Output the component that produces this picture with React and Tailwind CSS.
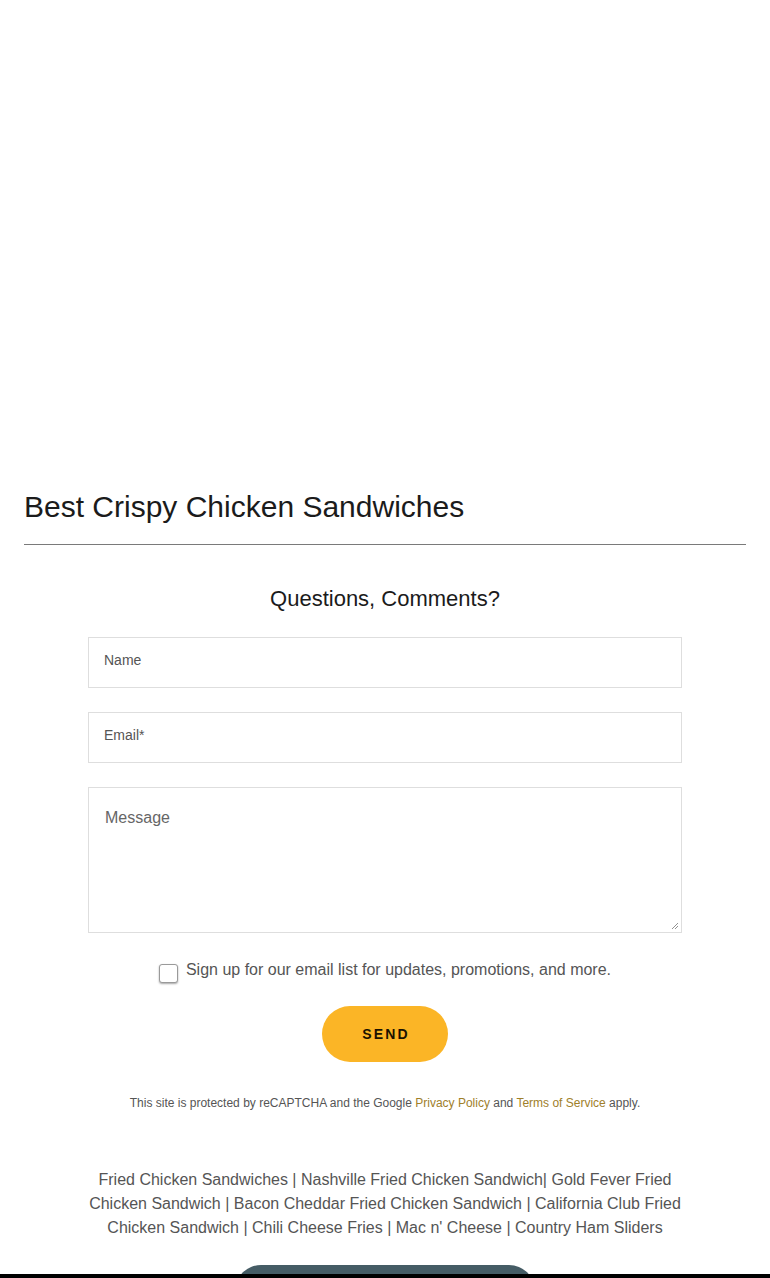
export default function App() {
  const font = { fontFamily: '"Liberation Sans", Arial, sans-serif' };
  return (
    <div className="bg-white min-h-[1278px] relative" style={font}>
      <div className="h-[489px]" />
      <div className="px-6">
        <h2 className="text-[30px] leading-[36px] text-[#1b1b1b] pb-[19px] border-b border-[#7a7a7a]">
          Best Crispy Chicken Sandwiches
        </h2>
      </div>
      <div className="pt-[40px] flex flex-col items-center">
        <h3 className="text-[22px] leading-[28px] text-[#1b1b1b]">Questions, Comments?</h3>
        <div className="w-[594px] mt-[24px] flex flex-col gap-[24px]">
          <div className="h-[51px] border border-[#dedede] pl-[15px] pt-[10px]">
            <span className="text-[14px] leading-[18px] text-[#555]">Name</span>
          </div>
          <div className="h-[51px] border border-[#dedede] pl-[15px] pt-[10px]">
            <span className="text-[14px] leading-[18px] text-[#555]">Email*</span>
          </div>
          <div className="h-[146px] border border-[#dedede] pl-[16px] pt-[18px] relative">
            <span className="text-[16px] leading-[22px] text-[#666]">Message</span>
            <svg className="absolute right-[2px] bottom-[2px]" width="8" height="8" viewBox="0 0 8 8">
              <line x1="1" y1="7" x2="7" y2="1" stroke="#777" strokeWidth="0.8" />
              <line x1="4" y1="7" x2="7" y2="4" stroke="#777" strokeWidth="0.8" />
            </svg>
          </div>
        </div>
        <div className="mt-[27px] flex items-start gap-[8px]">
          <div className="mt-[4px] w-[19px] h-[19px] rounded-[3px] border border-[#9a9a9a] bg-white shadow-[0_1px_2px_rgba(0,0,0,0.35)]" />
          <span className="text-[16px] leading-[20px] text-[#555]">
            Sign up for our email list for updates, promotions, and more.
          </span>
        </div>
        <button className="mt-[23px] w-[126px] h-[56px] rounded-full bg-[#fbb526] text-[#1a1200] text-[14px] font-bold tracking-[0.15em] pl-[2px]">
          SEND
        </button>
        <p className="mt-[34px] text-[12px] leading-[14px] text-[#555]">
          This site is protected by reCAPTCHA and the Google{" "}
          <span className="text-[#a0802a]">Privacy Policy</span> and{" "}
          <span className="text-[#a0802a]">Terms of Service</span> apply.
        </p>
        <p className="mt-[58px] w-[594px] text-center text-[16px] leading-[24px] text-[#555]">
          Fried Chicken Sandwiches | Nashville Fried Chicken Sandwich| Gold Fever Fried Chicken Sandwich | Bacon Cheddar Fried Chicken Sandwich | California Club Fried Chicken Sandwich | Chili Cheese Fries | Mac n' Cheese | Country Ham Sliders
        </p>
        <div className="mt-[25px] w-[300px] h-[48px] rounded-t-[26px] bg-[#455c65]" />
      </div>
      <div className="absolute left-0 right-0 top-[1274px] h-[4px] bg-black" />
    </div>
  );
}
